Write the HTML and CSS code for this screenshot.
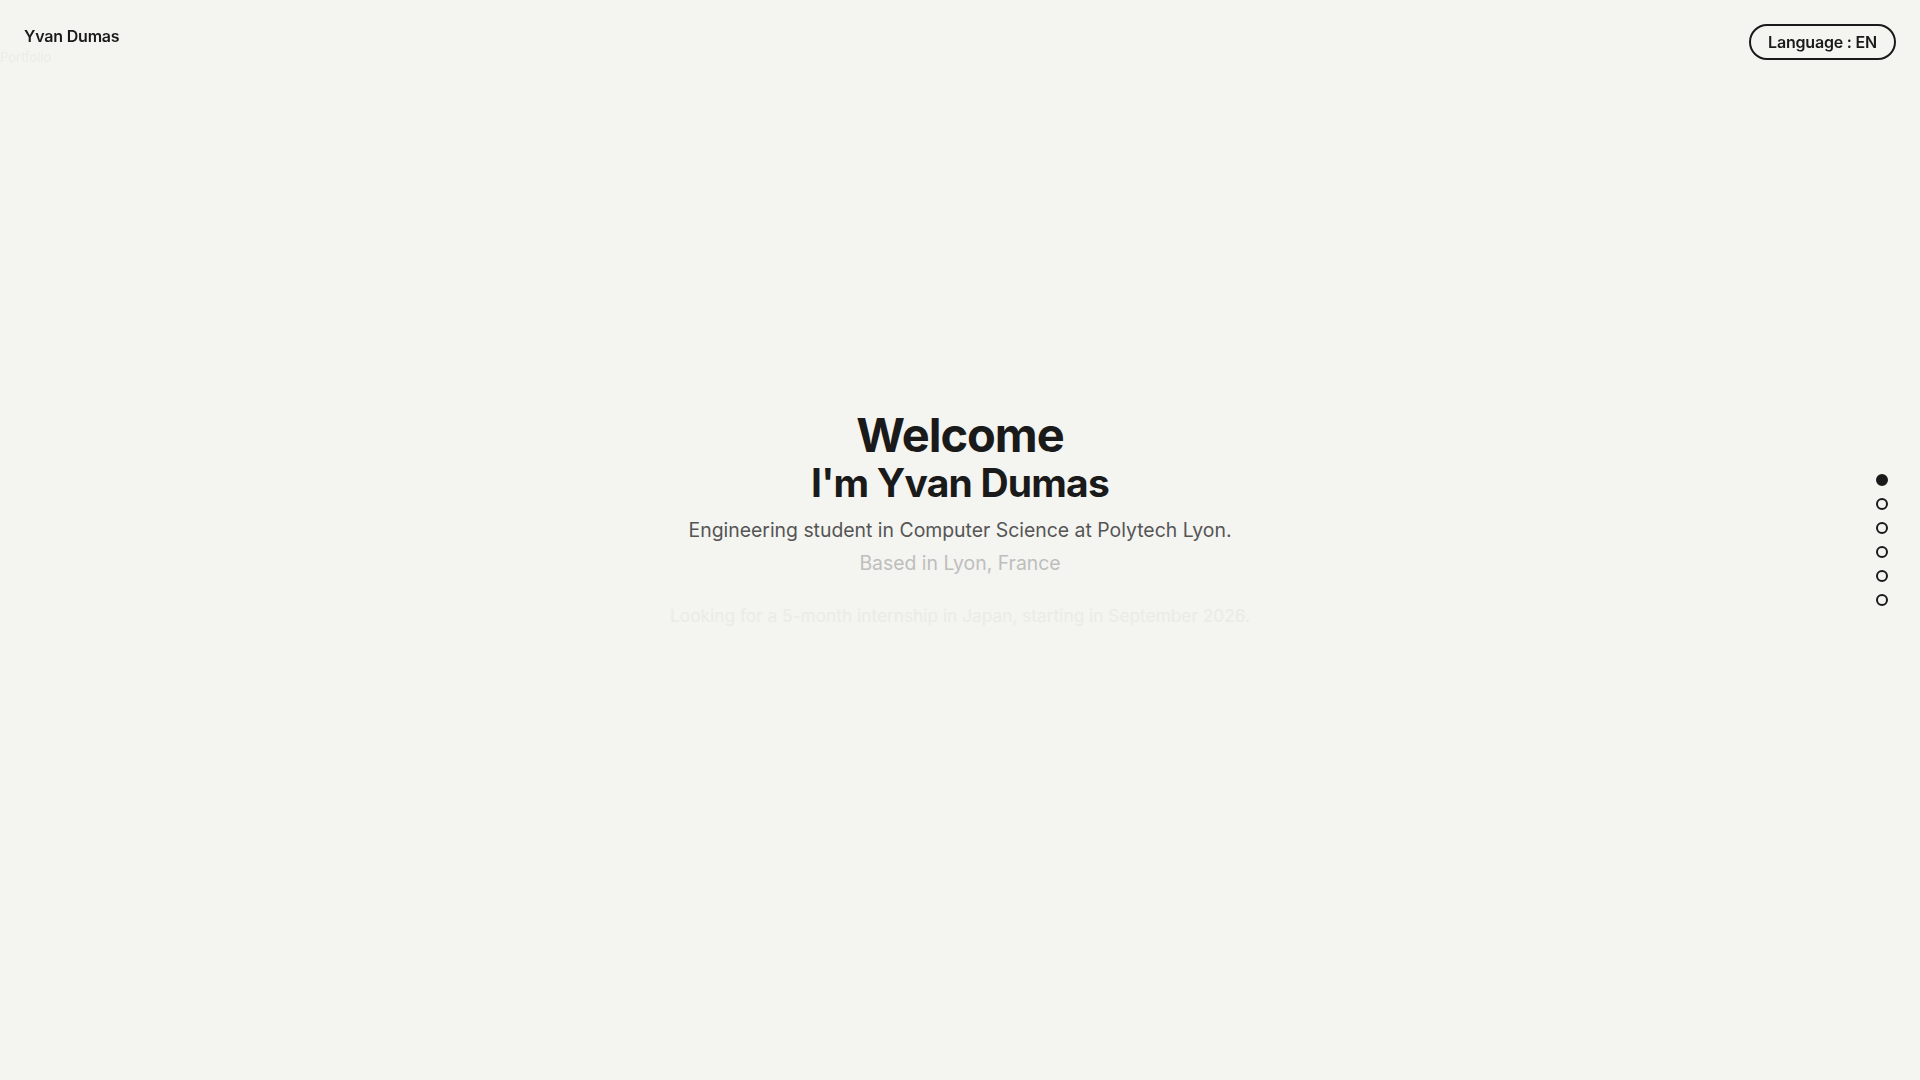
FILE: index.html
```html
<!DOCTYPE html>
<html lang="en">
<head>
<meta charset="utf-8">
<title>Yvan Dumas — Portfolio</title>
<link rel="stylesheet" href="styles.css">
</head>
<body>
<header class="topbar">
  <div class="brand">
    <div class="brand-name">Yvan Dumas</div>
    <div class="brand-sub">Portfolio</div>
  </div>
  <button class="lang-btn" type="button">Language : EN</button>
</header>

<main class="hero">
  <div class="hero-inner">
    <h1 class="hero-title">Welcome</h1>
    <h2 class="hero-name">I'm Yvan Dumas</h2>
    <p class="hero-sub">Engineering student in Computer Science at Polytech Lyon.</p>
    <p class="hero-loc">Based in Lyon, France</p>
    <p class="hero-note">Looking for a 5-month internship in Japan, starting in September 2026.</p>
  </div>
</main>

<nav class="dots">
  <span class="dot active"></span>
  <span class="dot"></span>
  <span class="dot"></span>
  <span class="dot"></span>
  <span class="dot"></span>
  <span class="dot"></span>
</nav>
</body>
</html>
```
FILE: styles.css
```css
* { box-sizing: border-box; }
html, body {
  margin: 0;
  padding: 0;
  height: 100%;
  overflow: hidden;
}
body {
  background: #f4f4f0;
  color: #1a1a1a;
  font-family: Inter, "Noto Sans", "Liberation Sans", sans-serif;
}

.topbar {
  position: fixed;
  top: 0;
  left: 0;
  right: 0;
  display: flex;
  justify-content: space-between;
  align-items: flex-start;
  padding: 24px 24px 0 24px;
  z-index: 10;
}
.brand {
  margin-top: 3px;
}
.brand-name {
  font-size: 16px;
  font-weight: 600;
  line-height: 19px;
  letter-spacing: -0.2px;
}
.brand-sub {
  margin-top: 3px;
  margin-left: -24px;
  font-size: 13px;
  line-height: 16px;
  color: #ebebe7;
}
.lang-btn {
  height: 36px;
  padding: 0 17px;
  border: 2px solid #1a1a1a;
  border-radius: 999px;
  background: transparent;
  color: #1a1a1a;
  font-family: inherit;
  font-size: 16px;
  font-weight: 600;
  letter-spacing: -0.2px;
  cursor: pointer;
}

.hero {
  height: 100vh;
  padding-bottom: 43px;
  display: flex;
  align-items: center;
  justify-content: center;
}
.hero-inner {
  text-align: center;
}
.hero-title {
  margin: 0;
  font-size: 47px;
  line-height: 53px;
  font-weight: 700;
  letter-spacing: -1px;
}
.hero-name {
  margin: 0;
  font-size: 39px;
  line-height: 44px;
  font-weight: 700;
  letter-spacing: -0.8px;
}
.hero-sub {
  margin: 10px 0 0;
  font-size: 19.4px;
  line-height: 30px;
  color: #555555;
}
.hero-loc {
  margin: 3px 0 0;
  font-size: 19.4px;
  line-height: 30px;
  color: #bebebe;
}
.hero-note {
  margin: 24px 0 0;
  font-size: 17.3px;
  line-height: 27px;
  color: #ebebe6;
}

.dots {
  position: fixed;
  right: 32px;
  top: 50%;
  transform: translateY(-50%);
  display: flex;
  flex-direction: column;
  gap: 12px;
}
.dot {
  display: block;
  width: 12px;
  height: 12px;
  border: 2px solid #1a1a1a;
  border-radius: 50%;
}
.dot.active {
  background: #1a1a1a;
}
```
